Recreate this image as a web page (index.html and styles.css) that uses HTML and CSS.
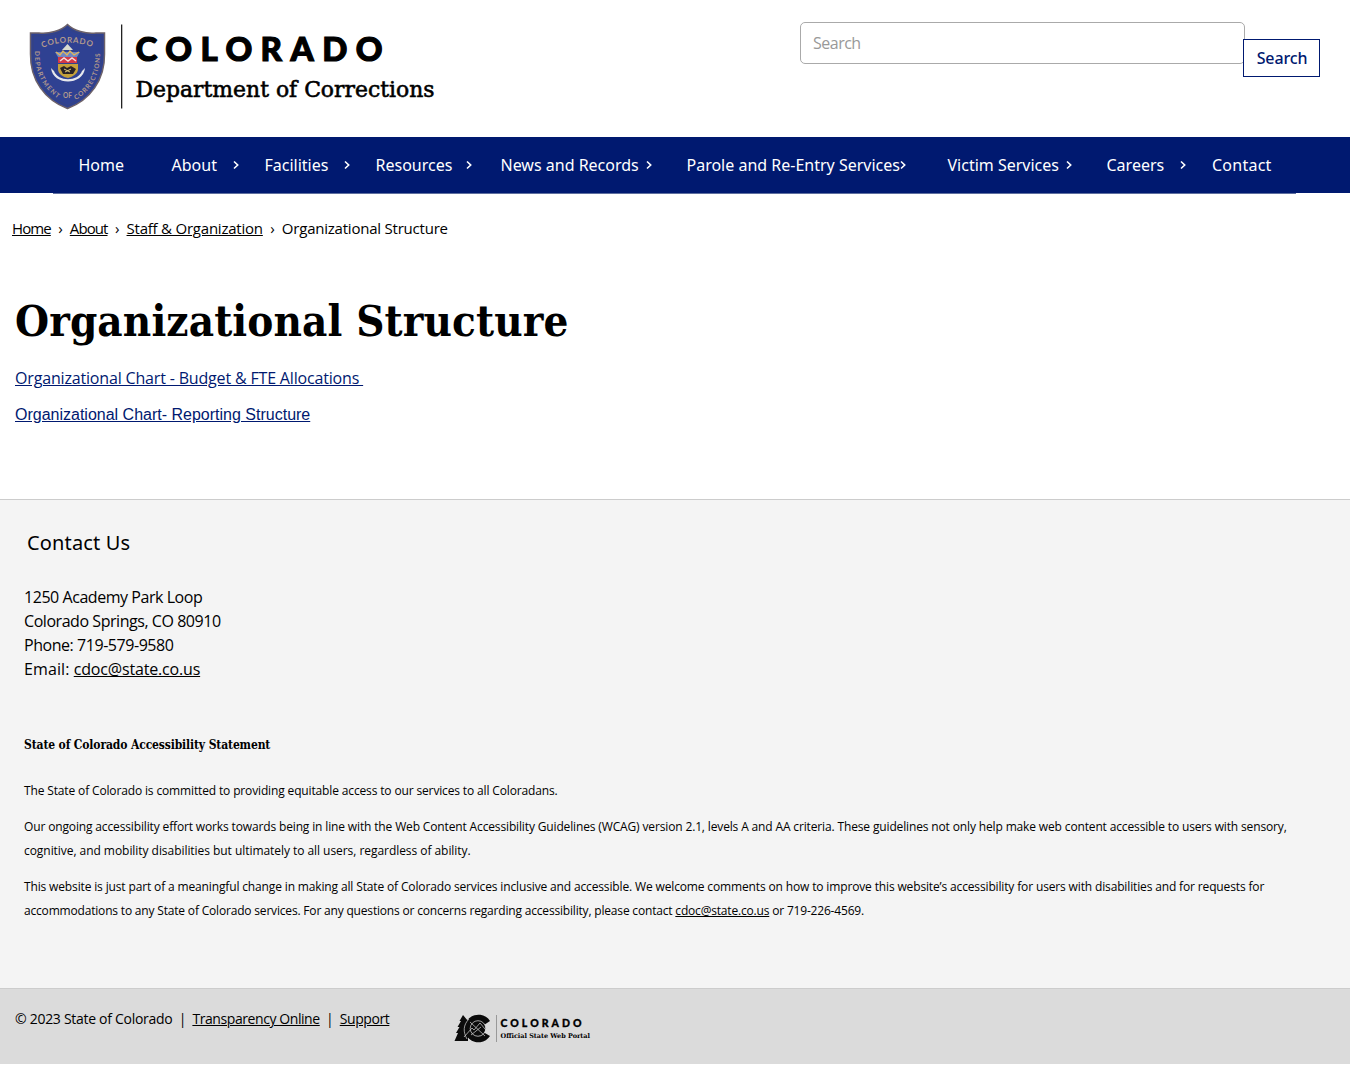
FILE: index.html
```
<!DOCTYPE html>
<html lang="en">
<head>
<meta charset="utf-8">
<title>Organizational Structure | Department of Corrections</title>
<link rel="stylesheet" href="styles.css">
</head>
<body>
<header class="site-header">
  <a class="brand" href="#">
    <svg width="420" height="90" viewBox="28 22 420 90" role="img" aria-label="Colorado Department of Corrections">
      <defs>
        <path id="arc-top" d="M43 48C54 41 81 41 93 48"/>
        <path id="arc-left" d="M35 51C34 71 41 87 60 100"/>
        <path id="arc-right" d="M76 100C94 88 101 72 100 50"/>
      </defs>
      <path d="M67.500 24.500C61 31 49 34 39 33H30.500V54C30 80 45 100 67.500 108.500C90 100 105 80 104.500 54V33H96C86 34 74 31 67.500 24.500Z" fill="#2f4192" stroke="#6d6269" stroke-width="1.500"/>
      <path d="M67.500 27.500C60 34 48 36 33 36V54C33 78 47 97 67.500 105.500C88 97 102 78 102 54V36C87 36 75 34 67.500 27.500Z" fill="none" stroke="#394475" stroke-width=".6"/>
      <g class="seal-text">
        <text class="seal-state"><textPath href="#arc-top" textLength="50">COLORADO</textPath></text>
        <text><textPath href="#arc-left" textLength="55">DEPARTMENT</textPath></text>
        <text x="63" y="98">OF</text>
        <text><textPath href="#arc-right" textLength="55">CORRECTIONS</textPath></text>
      </g>
      <path d="M62 50L67.500 44L73 50Z" fill="#d9dbd0"/>
      <path d="M55 52H80L77 57H58Z" fill="#6f87c5"/>
      <path d="M56 52l4 3 3-4 4 4 3-4 4 4 5-3" fill="none" stroke="#dfb65b" stroke-width="1.300"/>
      <path d="M58 57H77V63H58Z" fill="#d33846"/>
      <path d="M60 61l4-3 4 3 4-3 4 3" fill="none" stroke="#f3dedd" stroke-width="1.500"/>
      <path d="M58 64H78V69C78 74 72 77 68 78C63 77 58 74 58 69Z" fill="#c5a13a"/>
      <path d="M60 68l4-2 3 2 4-2 5 3-3 5H63Z" fill="#2a2326"/>
      <path d="M64 69l6 3M71 69l-6 3" stroke="#e0c878"/>
      <path d="M51 68C53 86 83 86 85 68L82 71C78 82 58 82 54 71Z" fill="#e6e7ed"/>
      <rect x="121" y="24.500" width="1.300" height="84" fill="#222"/>
      <text class="logo-state" x="135.500" y="61" textLength="247" lengthAdjust="spacing">COLORADO</text>
      <text class="logo-dept" x="135.500" y="97" textLength="299" lengthAdjust="spacingAndGlyphs">Department of Corrections</text>
    </svg>
  </a>
  <form class="search">
    <input class="search-input" type="text" placeholder="Search" aria-label="Search">
    <button class="search-button" type="button">Search</button>
  </form>
</header>

<nav class="main-nav">
  <ul class="menu">
    <li>Home</li>
    <li>About<svg class="chev" viewBox="0 0 6 10"><path d="M1 1.500L4.700 5L1 8.500"/></svg></li>
    <li>Facilities<svg class="chev" viewBox="0 0 6 10"><path d="M1 1.500L4.700 5L1 8.500"/></svg></li>
    <li class="tail-m">Resources<svg class="chev" viewBox="0 0 6 10"><path d="M1 1.500L4.700 5L1 8.500"/></svg></li>
    <li class="tail-l">News and Records<svg class="chev" viewBox="0 0 6 10"><path d="M1 1.500L4.700 5L1 8.500"/></svg></li>
    <li class="tail-xl">Parole and Re-Entry Services<svg class="chev" viewBox="0 0 6 10"><path d="M1 1.500L4.700 5L1 8.500"/></svg></li>
    <li class="tail-l">Victim Services<svg class="chev" viewBox="0 0 6 10"><path d="M1 1.500L4.700 5L1 8.500"/></svg></li>
    <li>Careers<svg class="chev" viewBox="0 0 6 10"><path d="M1 1.500L4.700 5L1 8.500"/></svg></li>
    <li class="wide">Contact</li>
  </ul>
</nav>

<main class="content">
  <div class="breadcrumb"><a class="crumb-short" href="#">Home</a><span class="sep">›</span><a class="crumb-short" href="#">About</a><span class="sep">›</span><a href="#">Staff &amp; Organization</a><span class="sep">›</span><span>Organizational Structure</span></div>
  <h1 class="title">Organizational Structure</h1>
  <p class="doc"><a href="#">Organizational Chart - Budget &amp; FTE Allocations&nbsp;</a></p>
  <p class="doc doc-alt"><a href="#">Organizational Chart- Reporting Structure</a></p>
</main>

<footer>
  <section class="footer-main">
    <h2 class="contact-title">Contact Us</h2>
    <address class="address"><span class="tight">1250 Academy Park Loop</span><br><span class="tight">Colorado Springs, CO 80910</span><br><span class="tight">Phone: 719-579-9580</span><br><span class="mail">Email: </span><a href="#">cdoc@state.co.us</a></address>
    <h3 class="statement">State of Colorado Accessibility Statement</h3>
    <p class="note">The State of Colorado is committed to providing equitable access to our services to all Coloradans.</p>
    <p class="note">Our ongoing accessibility effort works towards being in line with the Web Content Accessibility Guidelines (WCAG) version 2.1, levels A and AA criteria. These guidelines not only help make web content accessible to users with sensory,<br><span class="note-loose">cognitive, and mobility disabilities but ultimately to all users, regardless of ability.</span></p>
    <p class="note">This website is just part of a meaningful change in making all State of Colorado services inclusive and accessible. We welcome comments on how to improve this website’s accessibility for users with disabilities and for requests for<br><span class="note-tight">accommodations to any State of Colorado services. For any questions or concerns regarding accessibility, please contact <a href="#">cdoc@state.co.us</a> or 719-226-4569.</span></p>
  </section>
  <section class="footer-bar">
    <div class="legal"><span>© 2023 State of Colorado</span><span class="pipe">|</span><a href="#">Transparency Online</a><span class="pipe">|</span><a href="#">Support</a></div>
    <svg width="138" height="30" viewBox="454 1014 138 30" role="img" aria-label="Colorado Official State Web Portal">
      <path d="M463 1015L459.500 1021H461L457.500 1027H459.500L456 1033H458L454.500 1041H468V1021Z" fill="#0b0b0b"/>
      <path d="M490 1021A13.800 13.800 0 1 0 490 1036L484 1032.500A7 7 0 1 1 484 1025Z" fill="#0b0b0b"/>
      <circle cx="478" cy="1028.500" r="7.500" fill="#0b0b0b"/>
      <g fill="none" stroke="#d8d8d8" stroke-width=".7"><circle cx="478" cy="1028.500" r="7.800"/><path d="M464 1037L472 1028L474 1030L480 1023L490 1035M470 1022L485 1036M471 1035L481 1027"/><path d="M469 1019C463 1025 463 1032 467 1039"/></g>
      <path d="M496.500 1015V1042" stroke="#888" stroke-width=".8"/>
      <text class="portal-state" x="500.500" y="1026.500" textLength="81" lengthAdjust="spacing">COLORADO</text>
      <text class="portal-name" x="500.500" y="1038" textLength="89.500" lengthAdjust="spacingAndGlyphs">Official State Web Portal</text>
    </svg>
  </section>
</footer>
</body>
</html>
```
FILE: styles.css
```
* { box-sizing: border-box; }

body {
  margin: 0;
  background: #fff;
  color: #000;
  font: 16px/24px "Open Sans", sans-serif;
  letter-spacing: -.17px;
}

a { color: inherit; text-underline-offset: 1px; }

/* Header */
.site-header {
  display: flex;
  justify-content: space-between;
  align-items: flex-start;
  height: 137px;
  padding: 22px 30px 0 28px;
}
.brand { display: block; line-height: 0; letter-spacing: 0; }
.logo-state {
  font: 900 33px "Lato", sans-serif;
  stroke: #000;
  stroke-width: 1.200px;
}
.logo-dept {
  font: 22.500px "DejaVu Serif", serif;
  stroke: #000;
  stroke-width: .6px;
}
.seal-text {
  font: bold 6.500px "Lato", sans-serif;
  fill: #b39a8c;
}
.seal-state { font-size: 8px; }

.search { display: flex; align-items: flex-start; }
.search-input {
  width: 445px;
  height: 42px;
  padding: 0 12px;
  border: 1px solid #aaa;
  border-radius: 5px;
  background: #fff;
  font: 16px "Open Sans", sans-serif;
  letter-spacing: -.5px;
}
.search-input::placeholder { color: #999; opacity: 1; }
.search-button {
  width: 77px;
  height: 38px;
  margin: 17px 0 0 -2px;
  padding: 0 0 0 1px;
  border: 1px solid #001970;
  background: #fff;
  color: #001970;
  font: 500 16px "Noto Sans", sans-serif;
  letter-spacing: -.15px;
}

/* Navigation */
.main-nav { height: 56px; background: #001970; }
.menu {
  display: grid;
  grid-template-columns: 93px 93px 111px 125px 186px 261px 159px 105px 108px;
  width: 1243px;
  height: 57px;
  margin: 0 auto 0 53px;
  padding-left: 1.500px;
  border-bottom: 1px solid #5f6f9f;
  list-style: none;
  color: #fff;
  font-family: "Noto Sans", sans-serif;
  letter-spacing: 0;
}
.menu li {
  display: flex;
  align-items: center;
  padding: 0 2px 0 24px;
  white-space: nowrap;
}
.menu .tail-m { padding-right: 5px; }
.menu .tail-l { padding-right: 11px; }
.menu .tail-xl { padding-right: 20px; }
.menu .wide { padding-left: 24.500px; letter-spacing: .25px; }
.chev {
  flex: none;
  width: 6px;
  height: 10px;
  margin-left: auto;
  fill: none;
  stroke: #fff;
  stroke-width: 1.600;
}

/* Content */
.content { height: 306px; padding: 23px 15px 0; }
.breadcrumb {
  display: flex;
  margin-left: -3px;
  font-size: 15px;
  letter-spacing: -.22px;
}
.crumb-short { letter-spacing: -.9px; }
.sep { width: 19px; text-align: center; }
.title {
  margin: 55px 0 19px;
  font: bold 43.500px/52px "DejaVu Serif Condensed", "DejaVu Serif", serif;
  letter-spacing: .1px;
}
.doc { margin: 0 0 12px; color: #001970; }
.doc-alt { padding-top: 1px; font-family: "Liberation Sans", sans-serif; letter-spacing: 0; }

/* Footer */
.footer-main {
  height: 489px;
  padding: 30px 24px 0;
  border-top: 1px solid #ccc;
  background: #f4f4f4;
}
.contact-title {
  margin: 0 0 30px 3px;
  font: 20px/25px "Noto Sans", sans-serif;
  letter-spacing: .15px;
}
.address { margin-bottom: 52px; font-style: normal; }
.tight { letter-spacing: -.45px; }
.mail { letter-spacing: .1px; }
.statement {
  margin: 0 0 22px;
  font: bold 12px/24px "DejaVu Serif Condensed", "DejaVu Serif", serif;
  letter-spacing: -.13px;
}
.note {
  margin: 0 0 12px;
  font-size: 12px;
  letter-spacing: -.143px;
  white-space: nowrap;
}
.note-loose { letter-spacing: -.05px; }
.note-tight { letter-spacing: -.183px; }
.footer-bar {
  display: flex;
  height: 76px;
  padding: 18px 15px 0;
  border-top: 1px solid #ccc;
  background: #dbdbdb;
}
.footer-bar svg { margin-top: 7px; letter-spacing: 0; }
.legal {
  display: flex;
  width: 439px;
  font-size: 14px;
  letter-spacing: -.29px;
}
.legal a { letter-spacing: -.42px; }
.pipe { width: 20px; text-align: center; }
.portal-state { font: 900 10.500px "Lato", sans-serif; stroke: #000; stroke-width: .3px; }
.portal-name { font: bold 6.500px "DejaVu Serif", serif; }
```
